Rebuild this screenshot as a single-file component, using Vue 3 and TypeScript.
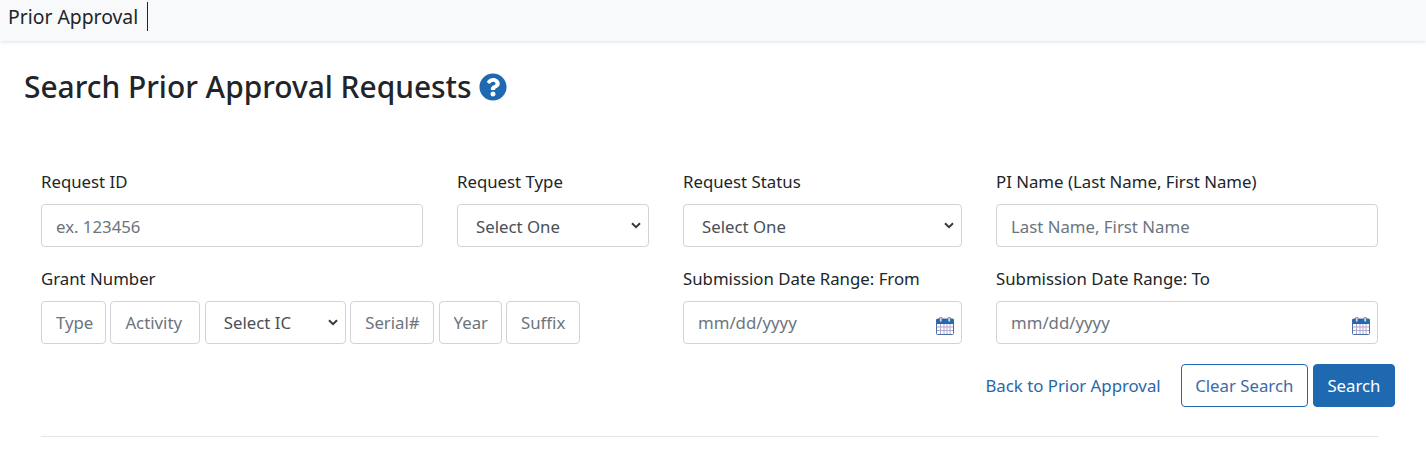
<script setup lang="ts">
const grantBefore: { ph: string; w: number }[] = [
  { ph: 'Type', w: 65 },
  { ph: 'Activity', w: 90 },
]
const grantAfter: { ph: string; w: number }[] = [
  { ph: 'Serial#', w: 84 },
  { ph: 'Year', w: 63 },
  { ph: 'Suffix', w: 74 },
]
</script>

<template>
  <div class="page">
    <header class="topbar">
      <span class="brand">Prior Approval</span>
    </header>
    <main class="main">
      <h1 class="title">
        Search Prior Approval Requests
        <svg class="help" viewBox="0 0 512 512" aria-hidden="true">
          <path fill="#1f69b0" d="M504 256c0 136.997-111.043 248-248 248S8 392.997 8 256C8 119.083 119.043 8 256 8s248 111.083 248 248zM262.655 90c-54.497 0-89.255 22.957-116.549 63.758-3.536 5.286-2.353 12.415 2.715 16.258l34.699 26.31c5.205 3.947 12.621 3.008 16.665-2.122 17.864-22.658 30.113-35.797 57.303-35.797 20.429 0 45.698 13.148 45.698 32.958 0 14.976-12.363 22.667-32.534 33.976C247.128 238.528 216 254.941 216 296v4c0 6.627 5.373 12 12 12h56c6.627 0 12-5.373 12-12v-1.333c0-28.462 83.186-29.647 83.186-106.667 0-58.002-60.165-102-116.531-102zM256 338c-25.365 0-46 20.635-46 46 0 25.364 20.635 46 46 46s46-20.636 46-46c0-25.365-20.635-46-46-46z" />
        </svg>
      </h1>
      <form class="form" @submit.prevent>
        <div class="grid">
          <label class="field">
            <span class="lbl">Request ID</span>
            <input class="ctl low" placeholder="ex. 123456" />
          </label>
          <label class="field">
            <span class="lbl">Request Type</span>
            <select class="ctl sel low"><option>Select One</option></select>
          </label>
          <label class="field">
            <span class="lbl">Request Status</span>
            <select class="ctl sel low"><option>Select One</option></select>
          </label>
          <label class="field">
            <span class="lbl">PI Name (Last Name, First Name)</span>
            <input class="ctl low" placeholder="Last Name, First Name" />
          </label>

          <div class="field span2">
            <span class="lbl">Grant Number</span>
            <div class="grant">
              <input v-for="g in grantBefore" :key="g.ph" class="ctl" :style="{ width: g.w + 'px' }" :placeholder="g.ph" />
              <select class="ctl sel ic"><option>Select IC</option></select>
              <input v-for="g in grantAfter" :key="g.ph" class="ctl" :style="{ width: g.w + 'px' }" :placeholder="g.ph" />
            </div>
          </div>
          <label class="field">
            <span class="lbl">Submission Date Range: From</span>
            <span class="date">
              <input class="ctl" placeholder="mm/dd/yyyy" />
              <svg class="cal" viewBox="0 0 18 18" aria-hidden="true">
                <rect x="0.500" y="2" width="17" height="15.500" rx="1" fill="#fff" stroke="#4a6fa8" />
                <rect x="0.500" y="2" width="17" height="5" fill="#1f69b0" />
                <rect x="3.500" y="0.300" width="2.600" height="4.700" rx="1" fill="#f1c9c4" stroke="#1f69b0" stroke-width=".7" />
                <rect x="11.900" y="0.300" width="2.600" height="4.700" rx="1" fill="#f1c9c4" stroke="#1f69b0" stroke-width=".7" />
                <path d="M1 10h16M1 13.500h16M4.500 7v10M8 7v10M11 7v10M14 7v10" stroke="#b3a6cf" stroke-width="1" fill="none" />
              </svg>
            </span>
          </label>
          <label class="field">
            <span class="lbl">Submission Date Range: To</span>
            <span class="date">
              <input class="ctl" placeholder="mm/dd/yyyy" />
              <svg class="cal" viewBox="0 0 18 18" aria-hidden="true">
                <rect x="0.500" y="2" width="17" height="15.500" rx="1" fill="#fff" stroke="#4a6fa8" />
                <rect x="0.500" y="2" width="17" height="5" fill="#1f69b0" />
                <rect x="3.500" y="0.300" width="2.600" height="4.700" rx="1" fill="#f1c9c4" stroke="#1f69b0" stroke-width=".7" />
                <rect x="11.900" y="0.300" width="2.600" height="4.700" rx="1" fill="#f1c9c4" stroke="#1f69b0" stroke-width=".7" />
                <path d="M1 10h16M1 13.500h16M4.500 7v10M8 7v10M11 7v10M14 7v10" stroke="#b3a6cf" stroke-width="1" fill="none" />
              </svg>
            </span>
          </label>
        </div>
        <div class="actions">
          <a class="back" href="#">Back to Prior Approval</a>
          <button class="btn outline" type="button">Clear Search</button>
          <button class="btn solid" type="submit">Search</button>
        </div>
      </form>
      <hr class="rule" />
    </main>
  </div>
</template>

<style>
html, body { margin: 0; background: #fff; }
</style>

<style scoped>
.page {
  font-family: "Noto Sans", "Open Sans", sans-serif;
  font-size: 16.800px;
  color: #212529;
  height: 456px;
  overflow: hidden;
}
.topbar {
  height: 41px;
  background: #f8f9fa;
  box-shadow: 0 1px 4px rgba(0, 0, 0, 0.12);
  display: flex;
  align-items: flex-start;
  padding: 2px 0 0 8px;
  box-sizing: border-box;
}
.brand {
  font-size: 19.350px;
  line-height: 29px;
  padding-right: 9px;
  border-right: 1px solid #212529;
  color: #212529;
}
.main { padding: 0 48px 0 41px; }
.title {
  margin: 21px 0 0 -17px;
  height: 49px;
  font-size: 29.900px;
  line-height: 49px;
  font-weight: 500;
  display: flex;
  align-items: center;
  gap: 7px;
  color: #212529;
}
.help { width: 28px; height: 28px; }
.form { margin-top: 60px; }
.grid {
  display: grid;
  grid-template-columns: 382px 192px 279px 382px;
  column-gap: 34px;
  row-gap: 21px;
}
.field { display: flex; flex-direction: column; min-width: 0; }
.span2 { grid-column: span 2; }
.lbl { line-height: 24px; height: 24px; margin-bottom: 10px; white-space: nowrap; margin-top: -1px; }
.ctl {
  box-sizing: border-box;
  width: 100%;
  height: 43px;
  padding: 0 14px;
  border: 1px solid #ced4da;
  border-radius: 4px;
  background: #fff;
  font: inherit;
  color: #495057;
  outline: none;
}
.ctl.low { padding-top: 2px; }
.ctl::placeholder { color: #6c757d; opacity: 1; }
.sel {
  appearance: none;
  padding-left: 18px;
  background-image: url("data:image/svg+xml,%3Csvg xmlns='http://www.w3.org/2000/svg' viewBox='0 0 10 7'%3E%3Cpath d='M1 1.200l4 4 4-4' fill='none' stroke='%23343a40' stroke-width='2'/%3E%3C/svg%3E");
  background-repeat: no-repeat;
  background-position: right 7px center;
  background-size: 10px 7px;
}
.grant { display: flex; gap: 4.400px; }
.grant .ctl { flex: none; padding-right: 6px; }
.ic { width: 141px; }
.date { position: relative; display: block; }
.cal { position: absolute; right: 8px; top: 16px; width: 18px; height: 18px; }
.actions {
  display: flex;
  justify-content: flex-end;
  align-items: center;
  gap: 5px;
  margin: 20px -17px 0 0;
}
.back { color: #2a66ad; text-decoration: none; margin-right: 15px; }
.btn {
  height: 43px;
  box-sizing: border-box;
  padding: 0 13.500px;
  border-radius: 4px;
  border: 1px solid #1f69b0;
  font: inherit;
}
.outline { background: #fff; color: #3c6ba8; }
.solid { background: #1f69b0; color: #fff; }
.rule { margin: 29px 0 0; border: 0; border-top: 1px solid #e2e4e7; width: 1337px; }
</style>
